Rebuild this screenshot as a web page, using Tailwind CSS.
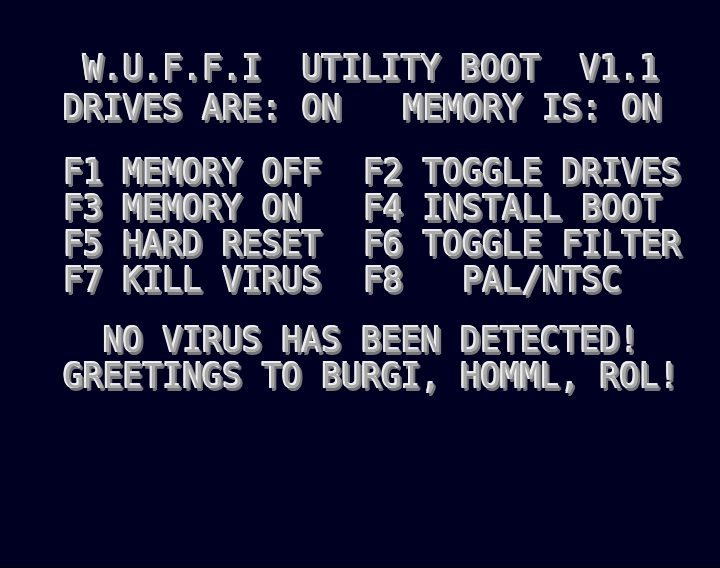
<!DOCTYPE html>
<html lang="en">
<head>
<meta charset="utf-8">
<title>W.U.F.F.I Utility Boot</title>
<script src="https://cdn.jsdelivr.net/npm/@tailwindcss/browser@4"></script>
</head>
<body class="min-h-screen bg-[#000022] border-b border-black">
<main class="flex flex-col pt-[51px] pl-16 will-change-transform font-['DejaVu_Sans_Mono',monospace] text-[33px] leading-[36px] text-[#aaaaaa] whitespace-pre [text-shadow:-1px_0_#eeeeee,-2px_0_#eeeeee,-1px_-2px_#eeeeee,-2px_-2px_#eeeeee,1px_1px_#777777,2px_2px_#777777,1px_3px_#777777]">
<header class="flex flex-col gap-1">
<h1> W.U.F.F.I  UTILITY BOOT  V1.1</h1>
<div class="grid grid-cols-[340px_1fr]">
<p>DRIVES ARE: ON</p>
<p>MEMORY IS: ON</p>
</div>
</header>
<ul class="mt-7 grid grid-cols-[300px_1fr]">
<li>F1 MEMORY OFF</li>
<li>F2 TOGGLE DRIVES</li>
<li>F3 MEMORY ON</li>
<li>F4 INSTALL BOOT</li>
<li>F5 HARD RESET</li>
<li>F6 TOGGLE FILTER</li>
<li>F7 KILL VIRUS</li>
<li>F8   PAL/NTSC</li>
</ul>
<footer class="mt-6 flex flex-col">
<p>  NO VIRUS HAS BEEN DETECTED!</p>
<p>GREETINGS TO BURGI, HOMML, ROL!</p>
</footer>
</main>
</body>
</html>
